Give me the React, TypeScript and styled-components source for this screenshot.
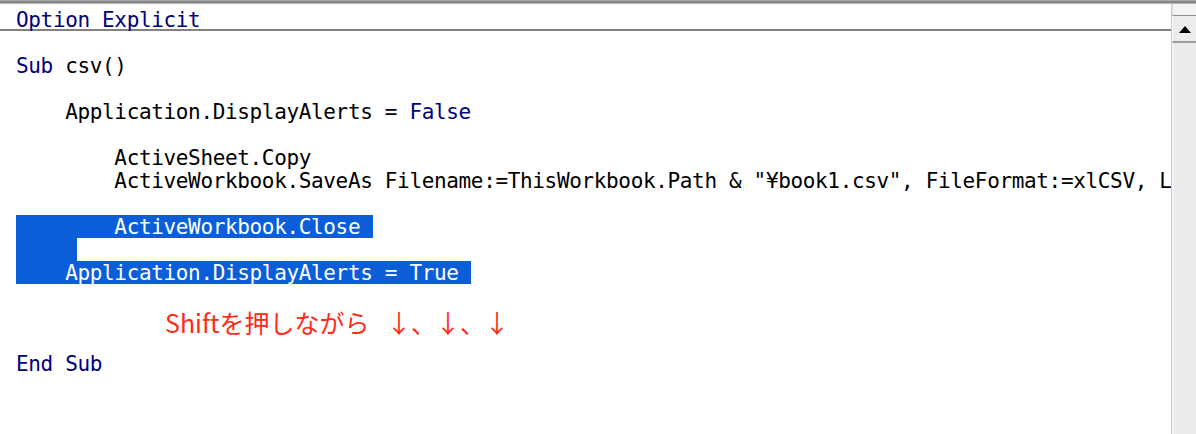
import React from "react";
import styled, { createGlobalStyle } from "styled-components";

const LH = 22.93;

const Global = createGlobalStyle`
  html, body { margin: 0; padding: 0; background: #fff; overflow: hidden; }
  #root { width: 1196px; height: 434px; }
`;

const Window = styled.div`
  width: 1196px;
  height: 434px;
  display: flex;
  flex-direction: column;
  background: #fff;
  position: relative;
  overflow: hidden;
`;

const TopEdge = styled.div`
  height: 4px;
  flex: none;
  background: linear-gradient(#b8b8b8 0%, #7c7c7c 45%, #8a8a8a 70%, #d0d0d0 100%);
`;

const Main = styled.div`
  flex: 1;
  display: flex;
  min-height: 0;
`;

const CodePane = styled.div`
  flex: 1;
  min-width: 0;
  overflow: hidden;
  font-family: "DejaVu Sans Mono", "Liberation Mono", monospace;
  font-size: 21px;
  letter-spacing: -0.35px;
  color: #000;
`;

const Declarations = styled.div`
  box-sizing: border-box;
  height: 27.4px;
  padding-top: 4px;
  border-bottom: 2px solid #828282;
`;

const Line = styled.div`
  height: ${LH}px;
  line-height: ${LH + 3}px;
  white-space: pre;
  padding-left: 16px;
`;

const Kw = styled.span`
  color: #000080;
`;

const Sel = styled.span`
  display: inline-block;
  height: ${LH}px;
  line-height: ${LH + 3}px;
  vertical-align: top;
  background: #0b5ed7;
  color: #fff;
`;

const Scrollbar = styled.div`
  width: 25px;
  flex: none;
  display: flex;
  flex-direction: column;
  box-sizing: border-box;
  border-left: 1px solid #cbcbcb;
  background: #f1f1f1;
`;

const ScrollTopGap = styled.div`
  height: 11px;
  flex: none;
  background: #f3f3f3;
  border-left: 1px solid #e2e2e2;
`;

const UpButton = styled.div`
  height: 28px;
  flex: none;
  box-sizing: border-box;
  border-top: 1px solid #8e8e8e;
  border-bottom: 2px solid #9c9c9c;
  background: #ececec;
  display: flex;
  align-items: center;
  justify-content: center;
  border-left: 1px solid #f8f8f8;
`;

const Arrow = styled.div`
  width: 0;
  height: 0;
  border-left: 6px solid transparent;
  border-right: 6px solid transparent;
  border-bottom: 7px solid #000;
  margin-top: 1px;
`;

const Track = styled.div`
  flex: 1;
  background: #ebebeb;
  border-left: 2px solid #f5f5f5;
`;

const Note = styled.div`
  position: absolute;
  left: 165px;
  top: 310px;
  font-family: "Noto Sans CJK JP", "Noto Sans", sans-serif;
  font-size: 25px;
  line-height: 25px;
  color: #ff2a18;
  white-space: pre;
`;

const NoteArrows = styled.span`
  margin-left: 17px;
  letter-spacing: -0.5px;
`;

type Row = React.ReactNode;

const rows: Row[] = [
  "",
  <>
    <Kw>Sub</Kw> csv()
  </>,
  "",
  <>
    {"    Application.DisplayAlerts = "}
    <Kw>False</Kw>
  </>,
  "",
  "        ActiveSheet.Copy",
  '        ActiveWorkbook.SaveAs Filename:=ThisWorkbook.Path & "¥book1.csv", FileFormat:=xlCSV, Local:=True',
  "",
  <Sel>{"        ActiveWorkbook.Close "}</Sel>,
  <Sel>{"     "}</Sel>,
  <Sel>{"    Application.DisplayAlerts = True "}</Sel>,
  "",
  "",
  "",
  <Kw>End Sub</Kw>,
  "",
  "",
];

export default function App() {
  return (
    <>
      <Global />
      <Window>
        <TopEdge />
        <Main>
          <CodePane>
            <Declarations>
              <Line>
                <Kw>Option Explicit</Kw>
              </Line>
            </Declarations>
            {rows.map((r, i) => (
              <Line key={i}>{r}</Line>
            ))}
          </CodePane>
          <Scrollbar>
            <ScrollTopGap />
            <UpButton>
              <Arrow />
            </UpButton>
            <Track />
          </Scrollbar>
        </Main>
        <Note>
          Shiftを押しながら<NoteArrows>↓、↓、↓</NoteArrows>
        </Note>
      </Window>
    </>
  );
}
